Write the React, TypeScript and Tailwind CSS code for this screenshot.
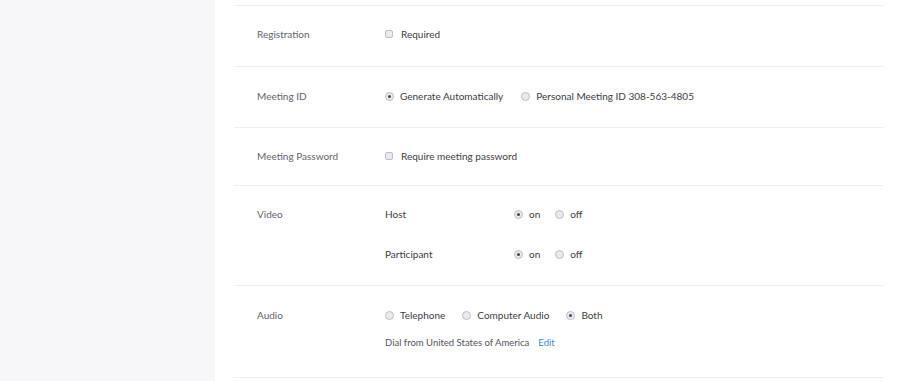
import type { ReactNode } from "react";

function Radio({ checked, children }: { checked?: boolean; children: ReactNode }) {
  return (
    <span className="flex items-center gap-[6px]">
      <span className="flex h-[9px] w-[9px] flex-none items-center justify-center rounded-full border border-[#bdbdc4] bg-[#eaeaee]">
        {checked ? <span className="h-[3px] w-[3px] rounded-full bg-[#44444c]" /> : null}
      </span>
      <span>{children}</span>
    </span>
  );
}

function Checkbox({ children }: { children: ReactNode }) {
  return (
    <span className="flex items-center gap-[8px]">
      <span className="h-[8px] w-[8px] flex-none rounded-[2px] border border-[#bdbdc4] bg-[#eaeaee]" />
      <span>{children}</span>
    </span>
  );
}

function Row({
  label,
  className,
  children,
}: {
  label: string;
  className: string;
  children?: ReactNode;
}) {
  return (
    <div className={`flex border-t border-[#efeff2] ${className}`}>
      <div className="w-[151px] flex-none pl-[23px] text-[#63636e]">{label}</div>
      <div className="flex-1 text-[#3c3c46]">{children}</div>
    </div>
  );
}

export default function App() {
  return (
    <div
      className="flex h-[381px] w-[899px] overflow-hidden bg-white text-[10px] leading-[14px]"
      style={{ fontFamily: "Lato, 'Open Sans', sans-serif" }}
    >
      <div className="w-[215px] flex-none bg-[#f7f7f9]" />
      <div className="flex-1 pt-[5px] pr-[15px] pl-[19px]">
        <Row label="Registration" className="h-[61px] pt-[21px]">
          <Checkbox>Required</Checkbox>
        </Row>
        <Row label="Meeting ID" className="h-[61px] pt-[22px]">
          <div className="flex items-center gap-[18px]">
            <Radio checked>Generate Automatically</Radio>
            <Radio>Personal Meeting ID 308-563-4805</Radio>
          </div>
        </Row>
        <Row label="Meeting Password" className="h-[58px] pt-[21px]">
          <Checkbox>Require meeting password</Checkbox>
        </Row>
        <Row label="Video" className="h-[100px] pt-[21px]">
          <div className="flex flex-col gap-[26px]">
            {["Host", "Participant"].map((who) => (
              <div key={who} className="flex items-center">
                <span className="w-[129px] flex-none">{who}</span>
                <div className="flex items-center gap-[15px]">
                  <Radio checked>on</Radio>
                  <Radio>off</Radio>
                </div>
              </div>
            ))}
          </div>
        </Row>
        <Row label="Audio" className="h-[92px] pt-[22px]">
          <div className="flex flex-col gap-[14px]">
            <div className="flex items-center gap-[17px]">
              <Radio>Telephone</Radio>
              <Radio>Computer Audio</Radio>
              <Radio checked>Both</Radio>
            </div>
            <div className="flex items-center gap-[9px] text-[9.5px]">
              <span className="text-[#54545e]">Dial from United States of America</span>
              <span className="text-[#3a85e0]">Edit</span>
            </div>
          </div>
        </Row>
        <div className="border-t border-[#efeff2]" />
      </div>
    </div>
  );
}
